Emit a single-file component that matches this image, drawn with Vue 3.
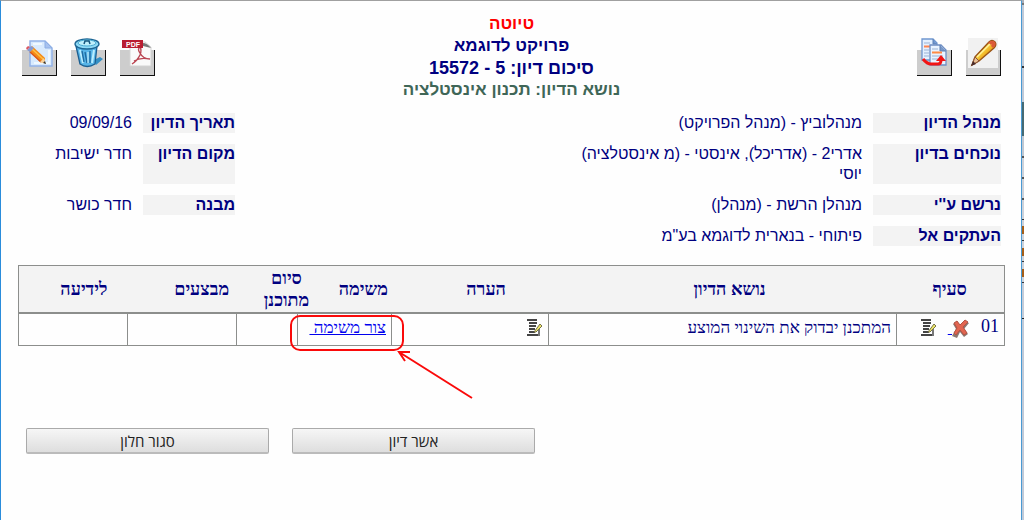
<script setup>
const mainFields = [
  { label: 'מנהל הדיון', value: 'מנהלוביץ - (מנהל הפרויקט)', side: 'תאריך הדיון', sideValue: '09/09/16' },
  { label: 'נוכחים בדיון', value: 'אדרי2 - (אדריכל), אינסטי - (מ אינסטלציה)\nיוסי', side: 'מקום הדיון', sideValue: 'חדר ישיבות' },
  { label: "נרשם ע''י", value: 'מנהלן הרשת - (מנהלן)', side: 'מבנה', sideValue: 'חדר כושר' },
  { label: 'העתקים אל', value: 'פיתוחי - בנארית לדוגמא בע"מ' }
]
const columns = ['סעיף', 'נושא הדיון', 'הערה', 'משימה', 'סיום מתוכנן', 'מבצעים', 'לידיעה']
</script>

<template>
  <div class="screen" dir="rtl">
    <div class="behind"></div>
    <main class="window">
      <header class="top">
        <div class="tools">
          <button class="tool" type="button" aria-label="עריכה">
            <svg width="30" height="30" viewBox="0 0 30 30">
              <defs>
                <linearGradient id="penBody" x1="0" y1="0" x2="1" y2="1">
                  <stop offset="0.35" stop-color="#ffe44d" /><stop offset="0.65" stop-color="#e89a10" />
                </linearGradient>
              </defs>
              <rect width="30" height="30" fill="#f1f1f1" />
              <path d="M4 27 L7 19 L21 4 Q24 1 27 4 Q29 7 26 10 L11 23 Z" fill="url(#penBody)" stroke="#9a5417" stroke-width="1.4" />
              <path d="M20 5 Q24 1 27 4 Q29 7 25 10 L23 8 Q25 5 22 7 Z" fill="#dc5b38" />
              <path d="M9 19 L22 6" stroke="#fff39b" stroke-width="1.5" />
              <path d="M7 19 L11 23 L4 27 Z" fill="#e9bf93" stroke="#8c5534" />
              <path d="M5 23 L8 26 L3 28 Z" fill="#4a2b2b" />
            </svg>
          </button>
          <button class="tool" type="button" aria-label="העתקה">
            <svg width="30" height="30" viewBox="0 0 30 30">
              <path d="M3 1 H14 L18 5 V22 H3 Z" fill="#e4f0ff" stroke="#6f96cf" stroke-width="1.3" />
              <path d="M14 1 V6 H18" fill="#6f96cf" stroke="#5c80b5" />
              <path d="M5 5 H11 M5 12 H10 M5 15 H10 M5 18 H10" stroke="#9bb3d5" />
              <path d="M5 8.500 H13" stroke="#ff8450" stroke-width="2" />
              <path d="M11 7 H22 L27 12 V27 H11 Z" fill="#e9f3ff" stroke="#6f8fc4" stroke-width="1.3" />
              <path d="M21 7 V13 H27" fill="#7898c9" stroke="#5c7eb2" />
              <path d="M13 11 H19 M13 18 H24 M13 21 H19" stroke="#9bb3d5" />
              <path d="M13 14.500 H23" stroke="#ff8b45" stroke-width="2" />
              <path d="M4 21 Q8 26 12 26 H19 Q22 26 22 22" fill="none" stroke="#f21414" stroke-width="3" />
              <path d="M17 23 L22 17 L27 23 Z" fill="#f21414" />
            </svg>
          </button>
        </div>

        <div class="titles">
          <div class="draft">טיוטה</div>
          <div>פרויקט לדוגמא</div>
          <div class="number">סיכום דיון: 5 - 15572</div>
          <div class="subject">נושא הדיון: תכנון אינסטלציה</div>
        </div>

        <div class="tools">
          <button class="tool" type="button" aria-label="PDF">
            <svg width="30" height="30" viewBox="0 0 30 30">
              <path d="M8 4 H23 L29 9 V28 H8 Z" fill="#fafafa" stroke="#d4d4d4" />
              <path d="M21 5 Q25 5 29 10 Q25 9 21 8" fill="#777" />
              <path d="M10 26 Q15 23 18 17 Q20 12 18 9 Q15 11 18 15 Q21 21 28 21 M12 23 Q18 19 28 21" fill="none" stroke="#ba4552" stroke-width="1.4" />
              <rect x="0" y="2" width="21" height="8" fill="#b91d32" />
              <text x="11" y="9" text-anchor="middle" class="pdf">PDF</text>
            </svg>
          </button>
          <button class="tool" type="button" aria-label="מחיקה">
            <svg width="30" height="30" viewBox="0 0 30 30">
              <path d="M21 22 L27 19 L30 21 L23 27 Z" fill="#348fc4" />
              <path d="M3 8 L7 26 Q14 31 22 26 L24 8 Z" fill="#57b5e8" stroke="#1c5f91" stroke-width="1.3" />
              <path d="M7 12 L10 25 M21 12 L19 25" stroke="#b8edff" stroke-width="2" />
              <path d="M9 13 L11 24 M12 14 L14 25 M17 13 V25" fill="none" stroke="#1f6ca3" stroke-width="1.4" />
              <path d="M15 14 V25" stroke="#d9f8ff" />
              <ellipse cx="14" cy="6" rx="12" ry="5" fill="#8fdaf5" stroke="#1d6593" stroke-width="1.3" />
              <ellipse cx="14" cy="5" rx="9" ry="3" fill="#c0f0fc" stroke="#4baad2" />
              <path d="M11 6 L12 3 H16 L17 6" fill="none" stroke="#17577e" stroke-width="1.5" />
            </svg>
          </button>
          <button class="tool" type="button" aria-label="עריכת מסמך">
            <svg width="30" height="30" viewBox="0 0 30 30">
              <path d="M6 3 H21 L28 10 V28 H6 Z" fill="#d8eafd" stroke="#93b3e8" stroke-width="1.5" />
              <path d="M21 3 V10 H28 Z" fill="#a7c2ef" stroke="#8caee4" />
              <path d="M9 6 H18 M10 25 H25 V12" fill="none" stroke="#eff8ff" stroke-width="2" />
              <path d="M4 12 L8 8 L21 20 L21 25 L16 24 Z" fill="#f48a16" />
              <path d="M7 10 L20 22" stroke="#ffc047" stroke-width="1.6" />
              <path d="M6 14 L17 24" stroke="#d8551d" stroke-width="1.4" />
              <path d="M3 12 L7 8 L10 10 L6 14 Z" fill="#829ad5" />
              <path d="M3 12 L6 9 L4 8 L2 10 Z" fill="#d95863" />
              <path d="M16 24 L20 20 L22 26 Z" fill="#f5d09a" />
              <path d="M19 25 L21 23 L22 26 Z" fill="#333" />
            </svg>
          </button>
        </div>
      </header>

      <dl class="fields">
        <template v-for="f in mainFields" :key="f.label">
          <dt>{{ f.label }}</dt>
          <dd>{{ f.value }}</dd>
          <dt v-if="f.side">{{ f.side }}</dt>
          <dd v-if="f.side">{{ f.sideValue }}</dd>
        </template>
      </dl>

      <table class="items">
        <thead>
          <tr><th v-for="c in columns" :key="c" scope="col">{{ c }}</th></tr>
        </thead>
        <tbody>
          <tr>
            <td class="clause">
              <span class="index">01</span>
              <a href="#" class="remove" aria-label="מחק סעיף">
                <svg width="17" height="19" viewBox="0 0 17 19">
                  <path d="M1 5 L5 2 L8 7 L12 2 L17 4 L12 10 L16 15 L12 18 L8 13 L5 19 L0 17 L4 10 Z" fill="#8b7770" />
                  <path d="M2 4 L5 2 L8 6 L13 1 L16 3 L11 8 L15 14 L12 16 L8 11 L4 16 L2 14 L5 9 Z" fill="#e26550" stroke="#b35445" />
                </svg><span>&nbsp;</span>
              </a>
              <a href="#" class="note" aria-label="ערוך סעיף">
                <svg width="17" height="18" viewBox="0 0 17 18">
                  <path d="M1 1 H11 M3 4 H11 M3 7 H10 M3 10 H9 M3 13 H9 M1 16 H14" stroke="#444" stroke-width="2" />
                  <path d="M13 8 V17" stroke="#777" stroke-width="2" />
                  <path d="M8 13 L14 5 L16 7 L10 13 Z" fill="#eee66a" stroke="#77734a" />
                </svg>
              </a>
            </td>
            <td>המתכנן יבדוק את השינוי המוצע</td>
            <td>
              <a href="#" class="note" aria-label="ערוך הערה">
                <svg width="17" height="18" viewBox="0 0 17 18">
                  <path d="M1 1 H11 M3 4 H11 M3 7 H10 M3 10 H9 M3 13 H9 M1 16 H14" stroke="#444" stroke-width="2" />
                  <path d="M13 8 V17" stroke="#777" stroke-width="2" />
                  <path d="M8 13 L14 5 L16 7 L10 13 Z" fill="#eee66a" stroke="#77734a" />
                </svg>
              </a>
            </td>
            <td class="task">
              <a href="#">צור משימה&nbsp;</a>
              <svg class="callout" width="186" height="88" viewBox="0 0 186 88">
                <rect x="2" y="2" width="112" height="34" rx="9" />
                <path d="M183 84 L110 38 M121 38 L110 38 L116 47" />
              </svg>
            </td>
            <td></td>
            <td></td>
            <td></td>
          </tr>
        </tbody>
      </table>

      <div class="actions">
        <button type="button">אשר דיון</button>
        <button type="button">סגור חלון</button>
      </div>
    </main>
  </div>
</template>

<style>
body {
  margin: 0;
}
</style>

<style scoped>
.screen {
  display: flex;
  min-height: 100vh;
  color: #000080;
  font-family: "Liberation Sans", Arial, sans-serif;
}
.window {
  flex: 1;
  box-sizing: border-box;
  border: solid #a0a0a0;
  border-width: 1px 1px 0;
  border-right-color: #4a9ad4;
  border-left-color: #2a8cdb;
  background: #fefefe;
}
.behind {
  width: 2px;
  background: linear-gradient(
    #aab0ba 3px, #777 3px 5px, #c0cad8 5px 66px, #333 66px 68px, #c0cad8 68px 102px,
    #476b73 102px 136px, #c0c8d2 136px 156px, #555 156px 158px, #cdd2da 158px 177px,
    #555 177px 179px, #cdd2da 179px 198px, #555 198px 200px, #cdd2da 200px 219px,
    #333 219px 220px, #cdd2da 220px 226px, #a65e17 226px 234px, #cdd2da 234px 240px,
    #333 240px 241px, #cdd2da 241px 248px, #a65e17 248px 256px, #cdd2da 256px 261px,
    #333 261px 262px, #cdd2da 262px 269px, #a65e17 269px 277px, #cdd2da 277px 282px,
    #333 282px 283px, #c5ccd8 283px 318px, #222 318px 319px, #c0cad8 319px
  );
}
.top {
  display: flex;
  justify-content: space-between;
  padding: 12px 20px 0 21px;
}
.tools {
  display: flex;
  gap: 14px;
  width: 133px;
  padding-top: 37px;
}
.tool {
  display: flex;
  justify-content: center;
  box-sizing: border-box;
  width: 35px;
  height: 26px;
  padding: 0;
  border: solid #111;
  border-width: 0 1px 1px 0;
  background: #cdcdcd;
}
.tool svg {
  flex: none;
  margin-top: -12px;
}
.pdf {
  fill: #fff;
  font: bold 7px "Liberation Sans", Arial, sans-serif;
}
.titles {
  font-size: 17px;
  font-weight: bold;
  line-height: 22px;
  text-align: center;
}
.draft {
  color: #ff0000;
}
.number {
  font-size: 18px;
}
.subject {
  color: #3f6657;
}
.fields {
  display: grid;
  grid-template-columns: 128px 1fr 92px 110px;
  gap: 11px;
  margin: 12px 20px 0 21px;
  font-size: 16px;
  line-height: 20px;
}
.fields dt {
  background: #f3f3f3;
  font-weight: bold;
}
.fields dd {
  margin: 0;
  white-space: pre-line;
}
.items {
  display: block;
  margin: 19px 16px 0 17px;
  border: 1px solid #8c8e8c;
  font-family: "Liberation Serif", "Times New Roman", serif;
  font-size: 17px;
  line-height: 22px;
}
.items thead,
.items tbody {
  display: block;
}
.items tr {
  display: grid;
}
.items thead tr {
  grid-template-columns: 109fr 332fr 156fr 90fr 64fr 106fr 130fr;
  align-items: center;
  min-height: 46px;
  border-bottom: 2px solid #8c8e8c;
  background: #f3f3f3;
  font-size: 18px;
}
.items th {
  padding: 0 4px;
}
.items tbody tr {
  grid-template-columns: 108fr 348fr 157fr 94fr 61fr 109fr 108fr;
  min-height: 31px;
}
.items td {
  box-sizing: border-box;
  padding: 3px 5px;
  border-left: 1px solid #8c8e8c;
}
.items td:last-child {
  border-left: 0;
}
.items a {
  color: #0000ee;
}
.items svg {
  display: block;
}
.clause {
  display: flex;
  align-items: flex-start;
}
.clause span {
  line-height: 18px;
}
.clause .index {
  font-size: 18px;
}
.remove {
  display: flex;
  margin-right: 12px;
  padding-top: 2px;
}
.note {
  display: block;
  padding-top: 2px;
}
.clause .note {
  margin-right: 11px;
}
.task {
  position: relative;
}
.items .callout {
  position: absolute;
  top: 0;
  left: -9px;
  fill: none;
  stroke: #fa0a0a;
  stroke-width: 2;
  pointer-events: none;
}
.actions {
  display: flex;
  justify-content: flex-end;
  gap: 23px;
  margin: 82px 20px 0 25px;
}
.actions button {
  flex: 0 1 243px;
  height: 26px;
  padding: 0;
  border: 1px solid #aaa;
  border-bottom: 2px solid #bbb;
  border-radius: 2px;
  background: linear-gradient(#f6f6f6, #dedede);
  color: #222;
  font: 15px/20px "Open Sans", "Liberation Sans", sans-serif;
}
</style>
